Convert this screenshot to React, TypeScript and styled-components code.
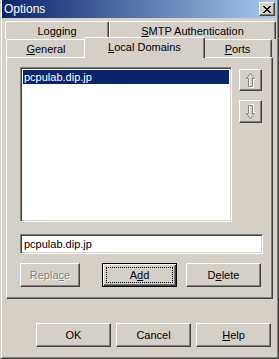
import React from 'react';
import styled, { createGlobalStyle } from 'styled-components';

const GlobalStyle = createGlobalStyle`
  html, body {
    margin: 0;
    padding: 0;
    background: #d4d0c8;
  }
  body {
    font-family: "Liberation Sans", Arial, sans-serif;
    font-size: 11px;
    color: #000;
  }
`;

const Window = styled.div`
  box-sizing: border-box;
  width: 279px;
  height: 359px;
  background: #d4d0c8;
  border-left: 1px solid #d4d0c8;
  border-right: 1px solid #404040;
  border-bottom: 1px solid #404040;
  box-shadow: inset 1px 0 #fff, inset -1px -1px #808080;
  display: flex;
  flex-direction: column;
`;

const TitleBar = styled.div`
  height: 18px;
  margin: 0 1px;
  padding: 0 2px 0 2px;
  display: flex;
  align-items: center;
  justify-content: space-between;
  background: linear-gradient(to right, #0a246a, #a6caf0);
  color: #fff;
  font-size: 12px;
`;

const CloseBtn = styled.div`
  box-sizing: border-box;
  width: 16px;
  height: 14px;
  background: #d4d0c8;
  border: 1px solid;
  border-color: #fff #404040 #404040 #fff;
  box-shadow: inset -1px -1px #808080;
  display: flex;
  align-items: center;
  justify-content: center;
`;

const Body = styled.div`
  padding: 3px 5px 0 5px;
  display: flex;
  flex-direction: column;
`;

const TabRow = styled.div<{ $shift: number }>`
  display: flex;
  height: 18px;
  align-items: flex-end;
  margin-left: ${({ $shift }) => $shift}px;
`;

const Tab = styled.div<{ $w: number; $active?: boolean }>`
  box-sizing: border-box;
  flex-shrink: 0;
  position: relative;
  width: ${({ $w, $active }) => ($active ? $w + 4 : $w)}px;
  height: ${({ $active }) => ($active ? 21 : 18)}px;
  margin: ${({ $active }) => ($active ? '0 -2px -1px -2px' : '0')};
  z-index: ${({ $active }) => ($active ? 2 : 0)};
  background: #d4d0c8;
  border-top: 1px solid #fff;
  border-left: 1px solid #fff;
  border-right: 1px solid #404040;
  border-radius: 2px 2px 0 0;
  box-shadow: inset -1px 0 #808080;
  display: flex;
  align-items: ${({ $active }) => ($active ? 'flex-start' : 'center')};
  padding-top: ${({ $active }) => ($active ? 3 : 0)}px;
  justify-content: center;
  white-space: nowrap;
`;

// underlined mnemonic letter
const U = styled.span`
  text-decoration: underline;
`;

const Panel = styled.div`
  box-sizing: border-box;
  position: relative;
  z-index: 1;
  height: 242px;
  border-top: 1px solid #fff;
  border-left: 1px solid #fff;
  border-right: 1px solid #404040;
  border-bottom: 1px solid #404040;
  box-shadow: inset -1px -1px #808080;
  padding: 9px 0 0 13px;
  display: flex;
  flex-direction: column;
`;

const ListRow = styled.div`
  display: flex;
  gap: 7px;
`;

const sunken = `
  box-sizing: border-box;
  border: 1px solid;
  border-color: #808080 #fff #fff #808080;
  box-shadow: inset 1px 1px #404040, inset -1px -1px #d4d0c8;
  background: #fff;
`;

const ListBox = styled.div`
  ${sunken}
  width: 212px;
  height: 155px;
  padding: 2px;
`;

const ListItem = styled.div<{ $selected?: boolean }>`
  height: 14px;
  line-height: 14px;
  padding-left: 1px;
  background: ${({ $selected }) => ($selected ? '#0a246a' : 'transparent')};
  color: ${({ $selected }) => ($selected ? '#fff' : '#000')};
`;

const ArrowCol = styled.div`
  display: flex;
  flex-direction: column;
  gap: 9px;
  padding-top: 2px;
`;

const Button = styled.button<{ $w: number; $h?: number; $mr?: number; $default?: boolean }>`
  box-sizing: border-box;
  width: ${({ $w }) => $w}px;
  height: ${({ $h }) => $h ?? 24}px;
  margin-right: ${({ $mr }) => $mr ?? 0}px;
  padding: 0;
  background: #d4d0c8;
  font-family: "Liberation Sans", Arial, sans-serif;
  font-size: 11px;
  color: #000;
  border: 1px solid;
  border-color: ${({ $default }) =>
    $default ? '#000' : '#fff #404040 #404040 #fff'};
  box-shadow: ${({ $default }) =>
    $default
      ? 'inset 1px 1px #fff, inset -1px -1px #404040, inset -2px -2px #808080'
      : 'inset -1px -1px #808080'};
  display: flex;
  align-items: center;
  justify-content: center;
  flex-shrink: 0;
  &:disabled {
    color: #808080;
    text-shadow: 1px 1px #fff;
  }
`;

const FocusRing = styled.span`
  box-sizing: border-box;
  align-self: stretch;
  flex: 1;
  margin: 3px;
  border: 1px dotted #000;
  display: flex;
  align-items: center;
  justify-content: center;
`;

const TextInput = styled.div`
  ${sunken}
  width: 243px;
  height: 20px;
  margin-top: 12px;
  padding: 0 3px;
  display: flex;
  align-items: center;
`;

const ButtonRow = styled.div`
  display: flex;
  margin-top: 9px;
  gap: 9px;
`;

const Footer = styled.div`
  display: flex;
  justify-content: flex-end;
  gap: 5px;
  margin-top: 24px;
  padding-right: 2px;
`;

const Arrow = ({ down }: { down?: boolean }) => {
  const pts = '4.5,0.5 8.5,5.5 6.5,5.5 6.5,13.5 2.5,13.5 2.5,5.5 0.5,5.5';
  return (
    <svg width="10" height="15" viewBox="0 0 10 15">
      <g transform={down ? 'translate(0,15) scale(1,-1)' : undefined}>
        <polygon points={pts} fill="none" stroke="#fff" transform="translate(1,1)" />
        <polygon points={pts} fill="none" stroke="#808080" />
      </g>
    </svg>
  );
};

export default function App() {
  return (
    <>
      <GlobalStyle />
      <Window>
        <TitleBar>
          <span>Options</span>
          <CloseBtn>
            <svg width="8" height="7" viewBox="0 0 8 7">
              <path d="M0 0 L7 7 M1 0 L8 7 M7 0 L0 7 M8 0 L1 7" stroke="#000" strokeWidth="1" />
            </svg>
          </CloseBtn>
        </TitleBar>
        <Body>
          <TabRow $shift={-1}>
            <Tab $w={104}>
              Lo<U>g</U>ging
            </Tab>
            <Tab $w={167}>
              <U>S</U>MTP Authentication
            </Tab>
          </TabRow>
          <TabRow $shift={0}>
            <Tab $w={80}>
              <U>G</U>eneral
            </Tab>
            <Tab $w={117} $active>
              <U>L</U>ocal Domains
            </Tab>
            <Tab $w={69}>
              <U>P</U>orts
            </Tab>
          </TabRow>
          <Panel>
            <ListRow>
              <ListBox>
                <ListItem $selected>pcpulab.dip.jp</ListItem>
              </ListBox>
              <ArrowCol>
                <Button $w={23} $h={22} disabled>
                  <Arrow />
                </Button>
                <Button $w={23} $h={23} disabled>
                  <Arrow down />
                </Button>
              </ArrowCol>
            </ListRow>
            <TextInput>pcpulab.dip.jp</TextInput>
            <ButtonRow>
              <Button $w={60} $mr={13} disabled>
                Repla<U>c</U>e
              </Button>
              <Button $w={75} $default>
                <FocusRing>
                  A<U>d</U>d
                </FocusRing>
              </Button>
              <Button $w={75}>
                D<U>e</U>lete
              </Button>
            </ButtonRow>
          </Panel>
          <Footer>
            <Button $w={75}>OK</Button>
            <Button $w={75}>Cancel</Button>
            <Button $w={75}>
              <U>H</U>elp
            </Button>
          </Footer>
        </Body>
      </Window>
    </>
  );
}
